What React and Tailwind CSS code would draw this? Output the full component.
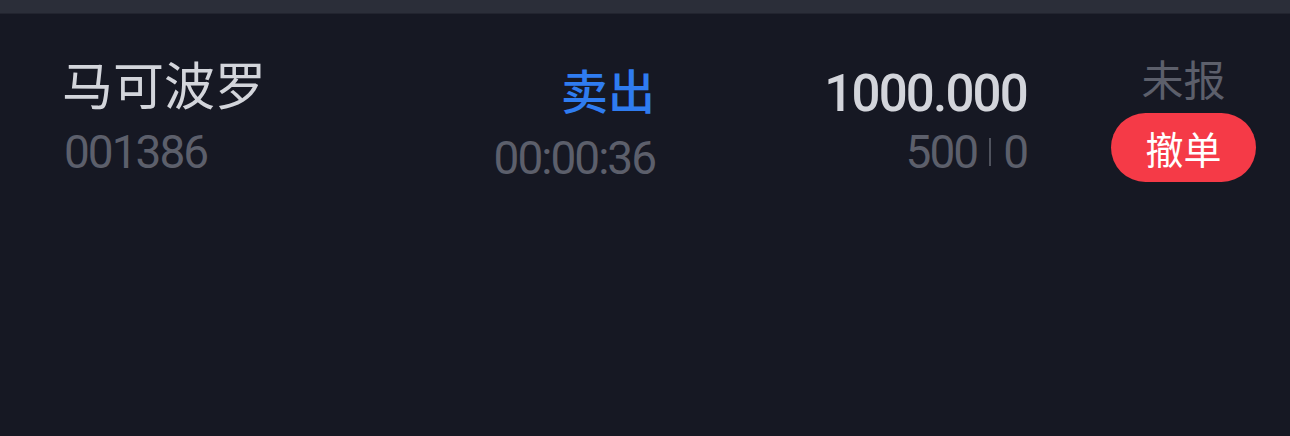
import React from 'react';

const cjk = { fontFamily: '"Noto Sans CJK SC", "Noto Sans", sans-serif' };
const num = { fontFamily: 'Roboto, "Noto Sans CJK SC", sans-serif' };

const OrderRow = () => {
    return (
        <div className="flex items-start pl-[64px] pr-[34px] pt-[39px]">
            <div className="flex-1 flex flex-col">
                <div style={cjk} className="text-[51px] leading-[60px] text-[#d3d5db] -ml-[2px]">马可波罗</div>
                <div style={num} className="text-[46px] leading-[48px] mt-[15px] text-[#5c5f6b] tracking-[-2px]">001386</div>
            </div>
            <div className="w-[200px] flex flex-col items-end">
                <div style={cjk} className="text-[47px] leading-[60px] font-medium text-[#2f7cf0] mt-[6px]">卖出</div>
                <div style={num} className="text-[46px] leading-[48px] mt-[15px] text-[#5c5f6b] tracking-[-2px]">00:00:36</div>
            </div>
            <div className="w-[250px] ml-[122px] flex flex-col items-end">
                <div style={num} className="text-[51px] leading-[60px] font-medium text-[#d3d5db] mt-[11px] tracking-[-1.8px]">1000.000</div>
                <div style={num} className="flex items-center text-[46px] leading-[48px] text-[#5c5f6b] mt-[4px] tracking-[-2px]">
                    <span>500</span>
                    <span className="w-[2px] h-[28px] bg-[#4f525d] mx-[12px]"></span>
                    <span>0</span>
                </div>
            </div>
            <div className="w-[145px] ml-[84px] flex flex-col items-center">
                <div style={cjk} className="text-[42px] leading-[60px] text-[#5c5f6b] -mt-[5px]">未报</div>
                <button style={cjk} className="w-[145px] h-[69px] mt-[5px] rounded-full bg-[#f53a47] text-white text-[38px] leading-none flex items-center justify-center">
                    撤单
                </button>
            </div>
        </div>
    );
};

const App = () => {
    return (
        <div className="w-[1290px] h-[436px] bg-[#161823] flex flex-col overflow-hidden">
            <div className="h-[14px] bg-[#2b2e39] border-b border-[#22242f]"></div>
            <OrderRow />
        </div>
    );
};

export default App;
